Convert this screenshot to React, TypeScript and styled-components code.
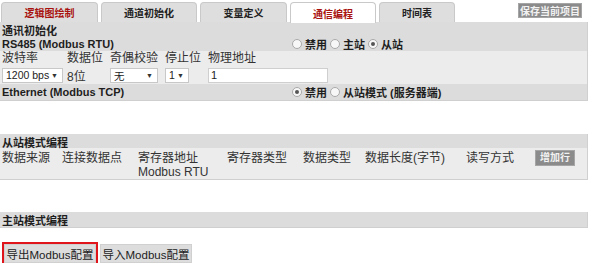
import * as React from "react";
import styled, { createGlobalStyle } from "styled-components";

const GlobalStyle = createGlobalStyle`
  body {
    margin: 0;
    background: #ffffff;
    font-family: "Liberation Sans", "Noto Sans CJK SC", sans-serif;
    color: #222;
  }
`;

const Page = styled.div`
  width: 588px;
`;

const TabBar = styled.div`
  display: flex;
  align-items: flex-end;
  gap: 3px;
  height: 22px;
  padding-left: 1px;
`;

const Tab = styled.div<{ $w: number; $active?: boolean; $accent?: boolean }>`
  display: flex;
  align-items: center;
  justify-content: center;
  box-sizing: border-box;
  width: ${(p) => p.$w}px;
  height: ${(p) => (p.$active ? "21px" : "20px")};
  margin-bottom: ${(p) => (p.$active ? "-1px" : "0")};
  background: ${(p) => (p.$active ? "#ffffff" : "#dedede")};
  border: 1px solid #c9c9c9;
  border-bottom: none;
  border-radius: 4px 4px 0 0;
  font-size: 10px;
  font-weight: bold;
  white-space: nowrap;
  color: ${(p) => (p.$accent || p.$active ? "#a8120f" : "#222")};
  position: relative;
  z-index: 1;
`;

const SaveButton = styled.div`
  align-self: flex-start;
  margin: 3px 6px 0 auto;
  height: 15px;
  width: 64px;
  display: flex;
  align-items: center;
  justify-content: center;
  background: #8b8b8b;
  border: 1px solid #a5a5a5;
  box-sizing: border-box;
  color: #f2f2f2;
  font-size: 10px;
  font-weight: bold;
  white-space: nowrap;
`;

const Section = styled.div<{ $tone: "dark" | "light" }>`
  background: ${(p) => (p.$tone === "dark" ? "#dcdcdc" : "#ececec")};
  border-right: 1px solid #d0d0d0;
`;

const Block = styled.div`
  border-bottom: 1px solid #cfcfcf;
`;

const Bar = styled.div<{ $h: number }>`
  display: grid;
  grid-template-columns: 290px 1fr;
  align-items: center;
  height: ${(p) => p.$h}px;
  padding-left: 2px;
  background: #dcdcdc;
  font-size: 11px;
  font-weight: bold;
  color: #1e1e1e;
  white-space: nowrap;
`;

const RadioGroup = styled.div`
  display: flex;
  align-items: center;
  font-size: 11px;
  font-weight: bold;
`;

const RadioItem = styled.label`
  display: flex;
  align-items: center;
  gap: 3px;
  margin-right: 3px;
`;

const RadioDot = styled.span<{ $checked?: boolean }>`
  width: 8px;
  height: 8px;
  border-radius: 50%;
  border: 1px solid #a9a9a9;
  background: #f7f7f7;
  display: inline-flex;
  align-items: center;
  justify-content: center;
  &::after {
    content: "";
    width: 4px;
    height: 4px;
    border-radius: 50%;
    background: ${(p) => (p.$checked ? "#555" : "transparent")};
  }
`;

const ParamGrid = styled.div`
  display: grid;
  grid-template-columns: 65px 43px 55px 43px 1fr;
  padding-left: 2px;
  background: #ececec;
`;

const ParamLabel = styled.div`
  height: 15px;
  line-height: 15px;
  font-size: 12px;
  color: #333;
  white-space: nowrap;
`;

const ParamCell = styled.div`
  height: 18px;
  display: flex;
  align-items: center;
  font-size: 12px;
  color: #333;
`;

const SelectBox = styled.div<{ $w: number }>`
  width: ${(p) => p.$w}px;
  height: 15px;
  box-sizing: border-box;
  display: flex;
  align-items: center;
  justify-content: space-between;
  padding: 0 4px 0 3px;
  background: #ffffff;
  border: 1px solid #c8c8c8;
  font-size: 10.5px;
  color: #222;
  white-space: nowrap;
`;

const Arrow = styled.span`
  font-size: 7px;
  color: #333;
`;

const TextInput = styled.input`
  width: 120px;
  height: 15px;
  box-sizing: border-box;
  margin: 0;
  padding: 0 2px;
  border: 1px solid #cfcfcf;
  font-family: "Liberation Sans", sans-serif;
  font-size: 11px;
  color: #222;
  outline: none;
`;

const Spacer = styled.div<{ $h: number }>`
  height: ${(p) => p.$h}px;
`;

const HeaderGrid = styled.div`
  display: grid;
  grid-template-columns: 60px 76px 89px 76px 62px 101px 69px 1fr;
  align-items: start;
  height: 31px;
  padding: 3px 0 0 2px;
  box-sizing: border-box;
  background: #ececec;
  font-size: 12px;
  line-height: 14px;
  color: #333;
  white-space: nowrap;
`;

const AddButton = styled.div`
  width: 40px;
  height: 16px;
  margin-top: -1px;
  display: flex;
  align-items: center;
  justify-content: center;
  background: #8b8b8b;
  border: 1px solid #a5a5a5;
  box-sizing: border-box;
  color: #f2f2f2;
  font-size: 10px;
  font-weight: bold;
`;

const ActionRow = styled.div`
  display: flex;
  gap: 4px;
  padding-left: 4px;
  margin-top: 16px;
`;

const ActionButton = styled.div<{ $focused?: boolean }>`
  width: 92px;
  height: 19px;
  box-sizing: border-box;
  display: flex;
  align-items: center;
  justify-content: center;
  background: #dddddd;
  border: 1px solid #d0d0d0;
  font-size: 11.5px;
  color: #222;
  white-space: nowrap;
  box-shadow: ${(p) => (p.$focused ? "0 0 0 2px #e0141b" : "none")};
`;

const tabs = [
  { label: "逻辑图绘制", w: 97, accent: true },
  { label: "通道初始化", w: 96 },
  { label: "变量定义", w: 87 },
  { label: "通信编程", w: 86, active: true },
  { label: "时间表", w: 76 },
];

const slaveHeaders = [
  ["数据来源"],
  ["连接数据点"],
  ["寄存器地址", "Modbus RTU"],
  ["寄存器类型"],
  ["数据类型"],
  ["数据长度(字节)"],
  ["读写方式"],
];

const Radio = ({ label, checked }: { label: string; checked?: boolean }) => (
  <RadioItem>
    <RadioDot $checked={checked} />
    {label}
  </RadioItem>
);

const App = (): React.ReactElement => {
  return (
    <Page>
      <GlobalStyle />
      <TabBar>
        {tabs.map((t) => (
          <Tab key={t.label} $w={t.w} $active={t.active} $accent={t.accent}>
            {t.label}
          </Tab>
        ))}
        <SaveButton>保存当前项目</SaveButton>
      </TabBar>

      <Section $tone="dark">
        <Block>
          <Bar $h={14}>通讯初始化</Bar>
          <Bar $h={15}>
            <span>RS485 (Modbus RTU)</span>
            <RadioGroup>
              <Radio label="禁用" />
              <Radio label="主站" />
              <Radio label="从站" checked />
            </RadioGroup>
          </Bar>
          <ParamGrid>
            <ParamLabel>波特率</ParamLabel>
            <ParamLabel>数据位</ParamLabel>
            <ParamLabel>奇偶校验</ParamLabel>
            <ParamLabel>停止位</ParamLabel>
            <ParamLabel>物理地址</ParamLabel>
            <ParamCell>
              <SelectBox $w={61}>
                1200 bps <Arrow>▼</Arrow>
              </SelectBox>
            </ParamCell>
            <ParamCell>8位</ParamCell>
            <ParamCell>
              <SelectBox $w={48}>
                无 <Arrow>▼</Arrow>
              </SelectBox>
            </ParamCell>
            <ParamCell>
              <SelectBox $w={24}>
                1 <Arrow>▼</Arrow>
              </SelectBox>
            </ParamCell>
            <ParamCell>
              <TextInput value="1" readOnly />
            </ParamCell>
          </ParamGrid>
          <Bar $h={16}>
            <span>Ethernet (Modbus TCP)</span>
            <RadioGroup>
              <Radio label="禁用" checked />
              <Radio label="从站模式 (服务器端)" />
            </RadioGroup>
          </Bar>
        </Block>
      </Section>

      <Spacer $h={33} />

      <Section $tone="light">
        <Block>
          <Bar $h={14}>从站模式编程</Bar>
          <HeaderGrid>
            {slaveHeaders.map((h) => (
              <div key={h[0]}>
                {h.map((line) => (
                  <div key={line}>{line}</div>
                ))}
              </div>
            ))}
            <AddButton>增加行</AddButton>
          </HeaderGrid>
        </Block>
      </Section>

      <Spacer $h={32} />

      <Section $tone="dark">
        <Block>
          <Bar $h={15}>主站模式编程</Bar>
        </Block>
      </Section>

      <ActionRow>
        <ActionButton $focused>导出Modbus配置</ActionButton>
        <ActionButton>导入Modbus配置</ActionButton>
      </ActionRow>
    </Page>
  );
};

export default App;
